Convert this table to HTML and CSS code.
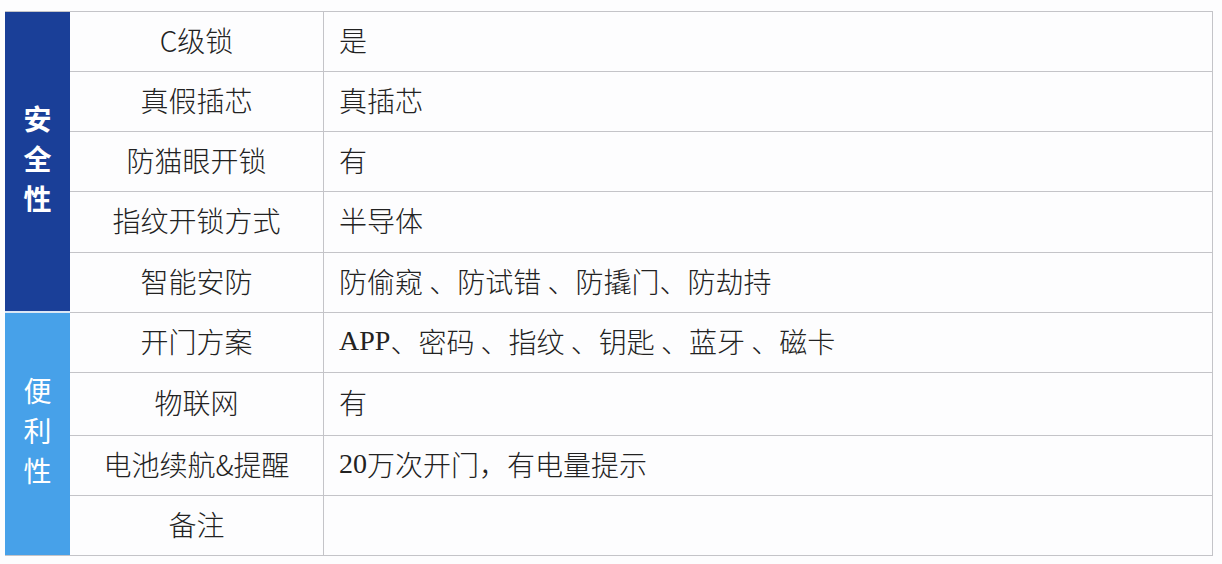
FILE: index.html
```html
<!DOCTYPE html>
<html lang="zh">
<head>
<meta charset="utf-8">
<link rel="stylesheet" href="styles.css">
</head>
<body>
<div class="table">
  <div class="cat cat-safe">安<br>全<br>性</div>
  <div class="cat cat-conv">便<br>利<br>性</div>

  <div class="label r1">C级锁</div><div class="value r1">是</div>
  <div class="label r2">真假插芯</div><div class="value r2">真插芯</div>
  <div class="label r3">防猫眼开锁</div><div class="value r3">有</div>
  <div class="label r4">指纹开锁方式</div><div class="value r4">半导体</div>
  <div class="label r5">智能安防</div><div class="value r5">防偷窥 、防试错 、防撬门、防劫持</div>
  <div class="label r6">开门方案</div><div class="value r6"><span class="latin">APP</span>、密码 、指纹 、钥匙 、蓝牙 、磁卡</div>
  <div class="label r7">物联网</div><div class="value r7">有</div>
  <div class="label r8">电池续航&amp;提醒</div><div class="value r8"><span class="latin">20</span>万次开门，有电量提示</div>
  <div class="label r9 last">备注</div><div class="value r9 last"></div>
</div>
</body>
</html>
```
FILE: styles.css
```css
html, body {
  margin: 0;
  padding: 0;
  background: #fdfdfe;
}
body {
  padding: 11px 0 0 5px;
  font-family: "Noto Sans CJK SC", "Noto Sans", sans-serif;
  color: #222;
}
.table {
  width: 1208px;
  display: grid;
  grid-template-columns: 65px 254px 1fr;
  grid-template-rows: 60px 60px 60px 61px 60px 60px 63px 60px 60px;
  border-top: 1px solid #c4c4c8;
  border-right: 1px solid #c4c4c8;
  box-sizing: border-box;
}
.cat {
  grid-column: 1;
  display: flex;
  align-items: center;
  justify-content: center;
  text-align: center;
  color: #fff;
  font-size: 28px;
  line-height: 40px;
  padding-bottom: 8px;
  box-sizing: border-box;
}
.cat-safe {
  grid-row: 1 / 6;
  background: #1a3f98;
  font-weight: 700;
  border-bottom: 2px solid #dbe6f5;
}
.cat-conv {
  grid-row: 6 / 10;
  background: #47a1e9;
  border-bottom: 1px solid #c4c4c8;
}
.label, .value {
  border-bottom: 1px solid #c4c4c8;
  font-size: 28px;
  font-weight: 300;
  display: flex;
  align-items: center;
  box-sizing: border-box;
  padding-bottom: 4px;
  white-space: pre;
}
.label {
  grid-column: 2;
  justify-content: center;
  border-right: 1px solid #c4c4c8;
}
.value {
  grid-column: 3;
  padding-left: 15px;
}
.latin {
  font-family: "Liberation Serif", serif;
  font-weight: 400;
  font-size: 28px;
}
.r1 { grid-row: 1; }
.r2 { grid-row: 2; }
.r3 { grid-row: 3; }
.r4 { grid-row: 4; }
.r5 { grid-row: 5; }
.r6 { grid-row: 6; }
.r7 { grid-row: 7; }
.r8 { grid-row: 8; }
.r9 { grid-row: 9; }
```
